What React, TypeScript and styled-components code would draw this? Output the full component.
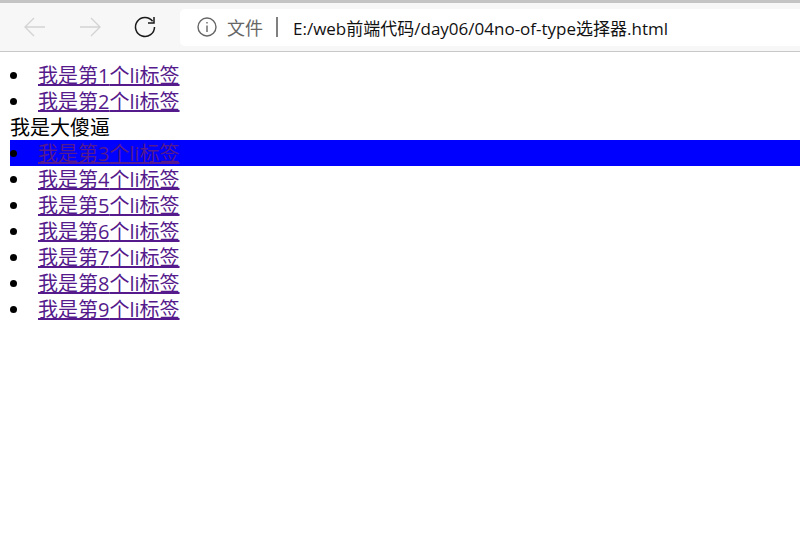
import { Fragment } from "react";
import { createGlobalStyle, styled } from "styled-components";

const GlobalStyle = createGlobalStyle`
  html, body {
    margin: 0;
    padding: 0;
    background: #fff;
  }
  body {
    font-family: "Open Sans", "Noto Sans CJK SC", sans-serif;
  }
`;

const Page = styled.div`
  width: 800px;
  height: 545px;
  overflow: hidden;
  background: #fff;
`;

const TopStrip = styled.div`
  height: 3px;
  background: #c4c4c4;
`;

const Toolbar = styled.div`
  display: flex;
  align-items: center;
  height: 48px;
  background: #f7f7f7;
  border-bottom: 1px solid #c8c8c8;
`;

const NavGroup = styled.div`
  display: flex;
  flex: none;
  width: 180px;
  padding-left: 8px;
  box-sizing: border-box;
`;

const NavButton = styled.div<{ $width: number }>`
  display: flex;
  align-items: center;
  justify-content: center;
  flex: none;
  width: ${(p) => p.$width}px;
  height: 36px;
`;

const AddressBar = styled.div`
  display: flex;
  align-items: center;
  flex: 1;
  height: 37px;
  padding-left: 17px;
  background: #fff;
  border-radius: 5px 0 0 5px;
`;

const Scheme = styled.span`
  margin-left: 10px;
  font-size: 18px;
  color: #666;
`;

const Divider = styled.span`
  width: 2px;
  height: 20px;
  margin: 0 15px 0 13px;
  background: #808080;
`;

const Url = styled.span`
  font-size: 17px;
  color: #111;
  white-space: nowrap;
`;

const Content = styled.div`
  padding: 10px 0 0 10px;
  font-size: 20px;
  line-height: 26px;
`;

const List = styled.ul`
  margin: 0;
  padding: 0;
  list-style: none;
`;

const Item = styled.li<{ $active?: boolean }>`
  display: flex;
  align-items: center;
  height: 26px;
  background: ${(p) => (p.$active ? "#0000ff" : "transparent")};
`;

const Bullet = styled.span`
  flex: none;
  width: 7px;
  height: 7px;
  margin: 1px 18px 0 0;
  border-radius: 50%;
  background: #000;
`;

const ItemLink = styled.a`
  margin-left: 3px;
  padding-top: 2px;
  color: #551a8b;
  text-decoration: underline;
`;

const Stray = styled.li`
  height: 26px;
  line-height: 28px;
  color: #000;
`;

const labels = [1, 2, 3, 4, 5, 6, 7, 8, 9];

export default function App() {
  return (
    <Page>
      <GlobalStyle />
      <TopStrip />
      <Toolbar>
        <NavGroup>
          <NavButton $width={54}>
            <svg width="24" height="24" viewBox="0 0 24 24" fill="none" stroke="#d4d4d4" strokeWidth="1.4">
              <path d="M2 12h20M11 3l-9 9 9 9" />
            </svg>
          </NavButton>
          <NavButton $width={56}>
            <svg width="24" height="24" viewBox="0 0 24 24" fill="none" stroke="#d4d4d4" strokeWidth="1.4">
              <path d="M2 12h20M13 3l9 9-9 9" />
            </svg>
          </NavButton>
          <NavButton $width={54}>
            <svg width="24" height="24" viewBox="0 0 24 24" fill="none" stroke="#1a1a1a" strokeWidth="1.5">
              <path d="M19.6 6.3A9.5 9.5 0 1 0 21.5 12" />
              <path d="M21 2v6h-6" />
            </svg>
          </NavButton>
        </NavGroup>
        <AddressBar>
          <svg width="20" height="20" viewBox="0 0 20 20" fill="none" stroke="#666" strokeWidth="1.4">
            <circle cx="10" cy="10" r="9" />
            <path d="M10 8.5v6.5M10 5v1.6" />
          </svg>
          <Scheme>文件</Scheme>
          <Divider />
          <Url>E:/web前端代码/day06/04no-of-type选择器.html</Url>
        </AddressBar>
      </Toolbar>
      <Content>
        <List>
          {labels.map((n) => (
            <Fragment key={n}>
              {n === 3 && <Stray>我是大傻逼</Stray>}
              <Item $active={n === 3}>
                <Bullet />
                <ItemLink href="#">我是第{n}个li标签</ItemLink>
              </Item>
            </Fragment>
          ))}
        </List>
      </Content>
    </Page>
  );
}
